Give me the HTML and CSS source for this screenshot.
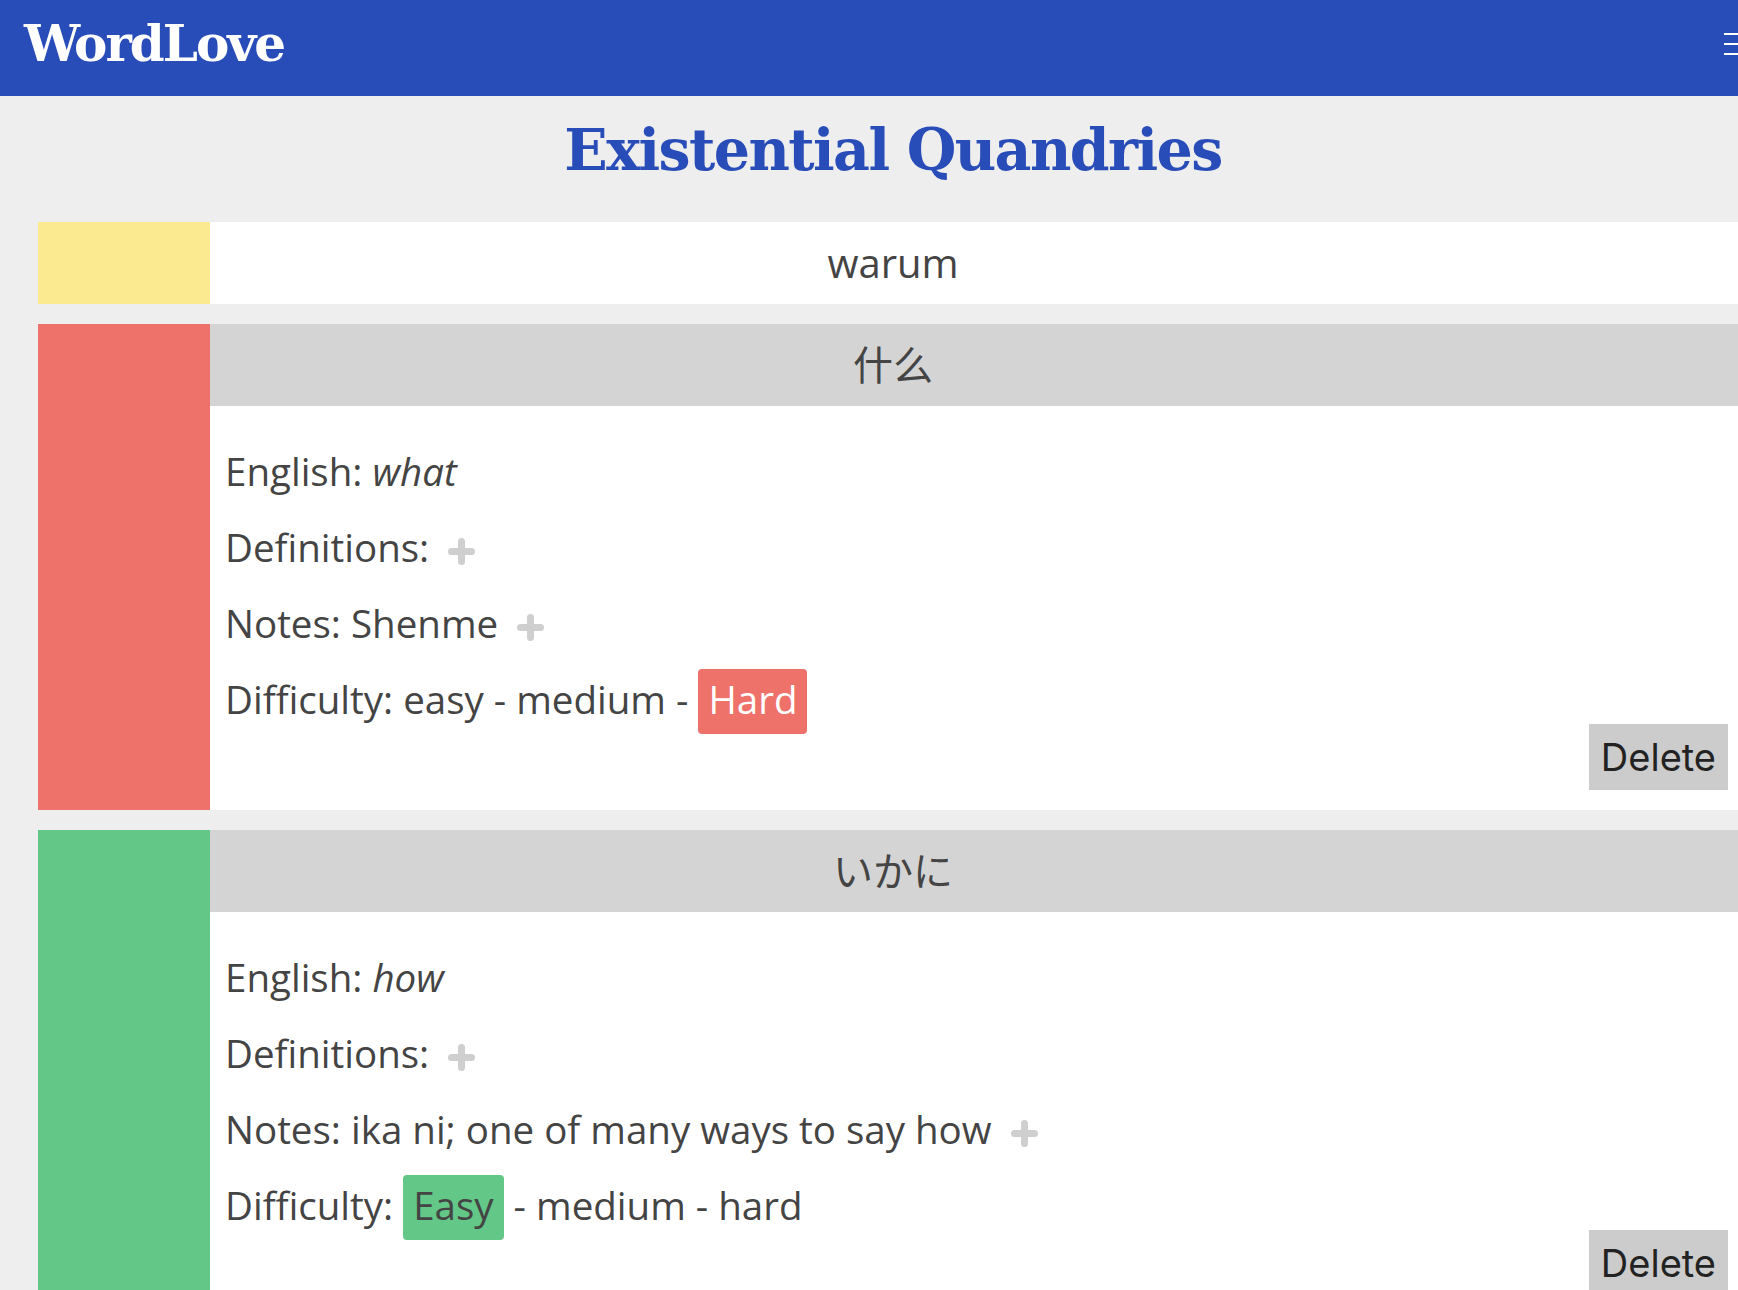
FILE: index.html
```html
<!DOCTYPE html>
<html lang="en">
<head>
<meta charset="utf-8">
<title>WordLove</title>
<link rel="stylesheet" href="styles.css">
</head>
<body>
<div class="page">
  <header class="topbar">
    <a class="logo" href="#">WordLove</a>
    <button class="menu" aria-label="Menu"><span></span><span></span><span></span></button>
  </header>
  <main class="content">
    <h1 class="list-title">Existential Quandries</h1>
    <div class="cards">
      <article class="card">
        <div class="stripe stripe-yellow"></div>
        <div class="card-head">warum</div>
      </article>

      <article class="card">
        <div class="stripe stripe-red"></div>
        <div class="card-head card-head-open">什么</div>
        <div class="card-body">
          <p class="field">English: <em>what</em></p>
          <p class="field">Definitions: <svg class="plus" viewBox="0 0 27 27"><path d="M13.5 3.5v20M3.5 13.5h20"/></svg></p>
          <p class="field">Notes: Shenme <svg class="plus" viewBox="0 0 27 27"><path d="M13.5 3.5v20M3.5 13.5h20"/></svg></p>
          <p class="field">Difficulty: easy - medium - <span class="badge badge-hard">Hard</span></p>
          <div class="actions"><button class="delete">Delete</button></div>
        </div>
      </article>

      <article class="card">
        <div class="stripe stripe-green"></div>
        <div class="card-head card-head-open">いかに</div>
        <div class="card-body">
          <p class="field">English: <em>how</em></p>
          <p class="field">Definitions: <svg class="plus" viewBox="0 0 27 27"><path d="M13.5 3.5v20M3.5 13.5h20"/></svg></p>
          <p class="field">Notes: ika ni; one of many ways to say how <svg class="plus" viewBox="0 0 27 27"><path d="M13.5 3.5v20M3.5 13.5h20"/></svg></p>
          <p class="field">Difficulty: <span class="badge badge-easy">Easy</span> - medium - hard</p>
          <div class="actions"><button class="delete">Delete</button></div>
        </div>
      </article>
    </div>
  </main>
</div>
</body>
</html>
```

FILE: styles.css
```css
html {
  overflow: hidden;
  background: #eeeeee;
}

body {
  margin: 0;
  font-family: "Open Sans", "Noto Sans CJK SC", sans-serif;
  color: #444444;
}

.page {
  width: 1786px;
}

.topbar {
  box-sizing: border-box;
  height: 96px;
  padding: 0 22px 9px 24px;
  background: #284cb8;
  display: flex;
  align-items: center;
  justify-content: space-between;
}

.logo {
  font-family: "DejaVu Serif", serif;
  font-weight: bold;
  font-size: 50px;
  letter-spacing: -2px;
  color: #ffffff;
  text-decoration: none;
}

.menu {
  width: 40px;
  padding: 0;
  border: 0;
  background: none;
  display: flex;
  flex-direction: column;
  gap: 8px;
}

.menu span {
  display: block;
  height: 2px;
  background: #ffffff;
}

.list-title {
  margin: 21px 0 39px;
  font-family: "DejaVu Serif", serif;
  font-weight: bold;
  font-size: 57px;
  line-height: 66px;
  letter-spacing: -1.6px;
  color: #284cb8;
  text-align: center;
}

.cards {
  padding: 0 38px;
  display: flex;
  flex-direction: column;
  gap: 20px;
}

.card {
  display: grid;
  grid-template-columns: 172px 1fr;
  background: #ffffff;
}

.stripe {
  grid-row: 1 / span 2;
}

.stripe-yellow { background: #fcea90; }
.stripe-red { background: #ee716a; }
.stripe-green { background: #63c787; }

.card-head {
  grid-column: 2;
  padding-right: 172px;
  font-size: 40px;
  line-height: 82px;
  text-align: center;
  color: #444444;
}

.card-head-open {
  background: #d4d4d4;
}

.card-body {
  grid-column: 2;
  padding: 27px 20px 20px 15px;
}

.field {
  margin: 0;
  font-size: 38.5px;
  line-height: 76px;
}

.plus {
  width: 27px;
  height: 27px;
  margin-left: 9px;
  vertical-align: -3px;
}

.plus path {
  fill: none;
  stroke: #cfcfcf;
  stroke-width: 7;
  stroke-linecap: round;
}

.badge {
  padding: 4px 10px 9px;
  border-radius: 4px;
}

.badge-hard {
  background: #ee716a;
  color: #ffffff;
}

.badge-easy {
  background: #63c787;
  color: #444444;
}

.actions {
  margin-top: -13px;
  display: flex;
  justify-content: flex-end;
}

.delete {
  height: 66px;
  padding: 0 12px;
  border: 0;
  border-radius: 0;
  background: #cccccc;
  font-family: "Inter", sans-serif;
  font-size: 38px;
  color: #222222;
}
```
